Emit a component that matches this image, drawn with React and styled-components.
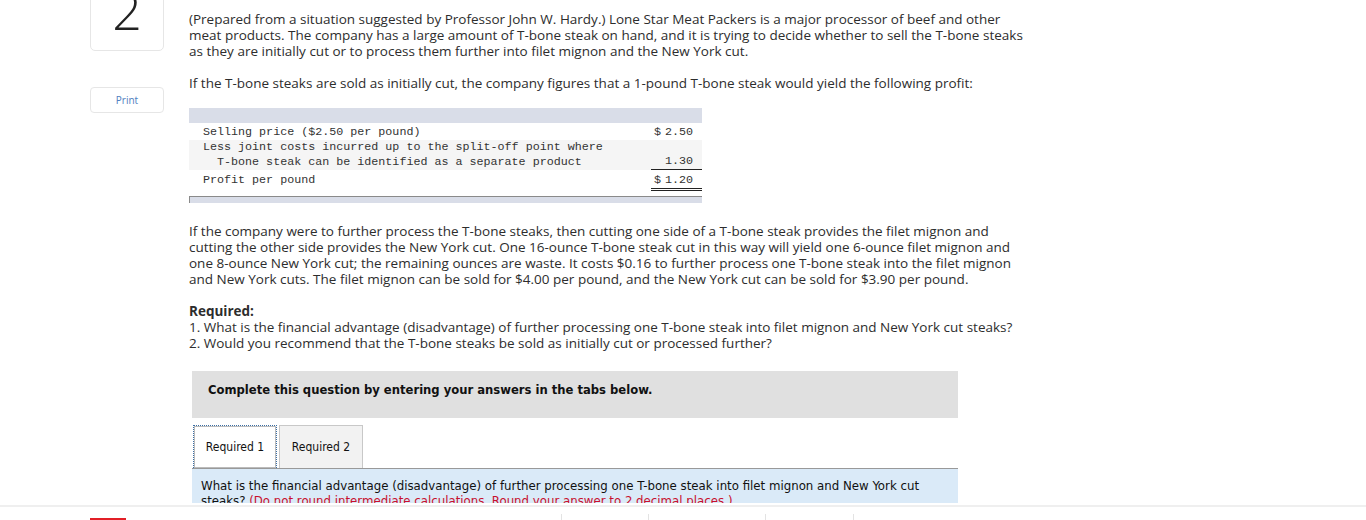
import React from 'react';
import styled, { createGlobalStyle } from 'styled-components';

const GlobalStyle = createGlobalStyle`
  html, body {
    margin: 0;
    padding: 0;
    background: #fff;
    overflow: hidden;
  }
  body {
    font-family: "Open Sans", Lato, sans-serif;
    color: #2d2d2d;
  }
`;

const Page = styled.div`
  height: 520px;
  overflow: hidden;
  display: flex;
  flex-direction: column;
`;

const Main = styled.div`
  display: grid;
  grid-template-columns: 74px 1fr;
  column-gap: 25px;
  padding-left: 90px;
  height: 505px;
  overflow: hidden;
`;

const Side = styled.div`
  display: flex;
  flex-direction: column;
  gap: 36px;
  margin-top: -26px;
`;

const NumberBox = styled.div`
  height: 77px;
  border: 1px solid #e6e6e6;
  border-radius: 5px;
  display: flex;
  align-items: flex-end;
  justify-content: center;
  box-sizing: border-box;
  padding-bottom: 14px;
  font-family: "Open Sans", sans-serif;
  font-weight: 300;
  font-size: 52px;
  line-height: 1;
  color: #222;
`;

const PrintButton = styled.div`
  height: 26px;
  border: 1px solid #e6e6e6;
  border-radius: 4px;
  box-sizing: border-box;
  display: flex;
  align-items: center;
  justify-content: center;
  font-size: 10px;
  color: #4f7ec0;
`;

const Content = styled.div`
  padding-top: 11px;
  font-size: 13.5px;
  line-height: 16px;
`;

const Para = styled.p`
  margin: 0 0 16px;
  white-space: nowrap;
`;

const Table = styled.div`
  width: 513px;
  margin: 17px 0 20px;
  font-family: "Liberation Mono", "DejaVu Sans Mono", monospace;
  font-size: 11.7px;
  line-height: 15px;
  color: #333;
`;

const HeadBand = styled.div`
  height: 15px;
  background: #d9dde8;
`;

const Row = styled.div`
  display: grid;
  grid-template-columns: 1fr 51px;
  padding: ${(p) => p.$pad || '0'};
  background: ${(p) => (p.$shade ? '#f5f5f5' : '#fff')};
`;

const Label = styled.div`
  padding-left: 14px;
  white-space: pre;
`;

const Amount = styled.div`
  display: flex;
  align-items: flex-end;
  justify-content: space-between;
  padding: 0 9px 0 3px;
  border-bottom: ${(p) =>
    p.$under === 'single' ? '1px solid #222' : p.$under === 'double' ? '3px double #222' : '0'};
`;

const FootBand = styled.div`
  margin-top: 5px;
  height: 6px;
  background: #d9dde8;
  border-top: 1px solid #8a8a8a;
  border-left: 1px solid #8a8a8a;
`;

const Bold = styled.div`
  font-weight: 700;
`;

const TaskBox = styled.div`
  margin: 20px 0 0 3px;
  width: 766px;
`;

const TaskHeader = styled.div`
  background: #e0e0e0;
  height: 47px;
  box-sizing: border-box;
  padding: 11px 0 0 16px;
  font-family: "DejaVu Sans Condensed", "DejaVu Sans", sans-serif;
  font-weight: 700;
  font-size: 12.9px;
  line-height: 16px;
  color: #111;
`;

const Tabs = styled.div`
  display: flex;
  gap: 2px;
  margin-top: 7px;
  padding-left: 1px;
  border-bottom: 1px solid #999;
`;

const Tab = styled.div`
  width: 84px;
  height: 43px;
  box-sizing: border-box;
  display: flex;
  align-items: center;
  justify-content: center;
  font-family: "DejaVu Sans Condensed", "DejaVu Sans", sans-serif;
  font-size: 12px;
  color: #111;
  background: ${(p) => (p.$active ? '#fff' : '#f2f2f2')};
  border: ${(p) => (p.$active ? '1px dotted #3a6ea5' : '1px solid #c8c8c8')};
  border-bottom: 0;
  margin-bottom: ${(p) => (p.$active ? '-1px' : '0')};
  box-shadow: ${(p) => (p.$active ? 'inset 0 0 0 1px #bbb' : 'none')};
`;

const Prompt = styled.div`
  background: #daeaf8;
  padding: 9px 9px 0;
  height: 34px;
  box-sizing: border-box;
  font-family: "DejaVu Sans Condensed", "DejaVu Sans", sans-serif;
  font-size: 13.1px;
  line-height: 15px;
  color: #111;
  overflow: hidden;
  white-space: nowrap;
`;

const Hint = styled.span`
  color: #c8102e;
`;

const Footer = styled.div`
  border-top: 2px solid #efefef;
  height: 13px;
  display: flex;
  align-items: flex-end;
  padding-left: 90px;
`;

const RedBar = styled.div`
  width: 36px;
  height: 2px;
  background: #e21f26;
`;

const Dividers = styled.div`
  display: flex;
  margin-left: 435px;
  height: 6px;
`;

const Divider = styled.div`
  width: ${(p) => p.$w}px;
  border-left: 1px solid #e3e3e3;
`;

export default function App() {
  return (
    <Page>
      <GlobalStyle />
      <Main>
        <Side>
          <NumberBox>2</NumberBox>
          <PrintButton>Print</PrintButton>
        </Side>
        <Content>
          <Para>
            (Prepared from a situation suggested by Professor John W. Hardy.) Lone Star Meat Packers is a major processor of beef and other
            <br />
            meat products. The company has a large amount of T-bone steak on hand, and it is trying to decide whether to sell the T-bone steaks
            <br />
            as they are initially cut or to process them further into filet mignon and the New York cut.
          </Para>
          <Para style={{ marginBottom: 0 }}>
            If the T-bone steaks are sold as initially cut, the company figures that a 1-pound T-bone steak would yield the following profit:
          </Para>
          <Table>
            <HeadBand />
            <Row $pad="2px 0 0">
              <Label>Selling price ($2.50 per pound)</Label>
              <Amount>
                <span>$</span>
                <span>2.50</span>
              </Amount>
            </Row>
            <Row $shade>
              <Label>{'Less joint costs incurred up to the split-off point where\n  T-bone steak can be identified as a separate product'}</Label>
              <Amount $under="single">
                <span />
                <span>1.30</span>
              </Amount>
            </Row>
            <Row $pad="3px 0 0">
              <Label>Profit per pound</Label>
              <Amount $under="double">
                <span>$</span>
                <span>1.20</span>
              </Amount>
            </Row>
            <FootBand />
          </Table>
          <Para>
            If the company were to further process the T-bone steaks, then cutting one side of a T-bone steak provides the filet mignon and
            <br />
            cutting the other side provides the New York cut. One 16-ounce T-bone steak cut in this way will yield one 6-ounce filet mignon and
            <br />
            one 8-ounce New York cut; the remaining ounces are waste. It costs $0.16 to further process one T-bone steak into the filet mignon
            <br />
            and New York cuts. The filet mignon can be sold for $4.00 per pound, and the New York cut can be sold for $3.90 per pound.
          </Para>
          <Para style={{ marginBottom: 0 }}>
            <Bold>Required:</Bold>
            1. What is the financial advantage (disadvantage) of further processing one T-bone steak into filet mignon and New York cut steaks?
            <br />
            2. Would you recommend that the T-bone steaks be sold as initially cut or processed further?
          </Para>
          <TaskBox>
            <TaskHeader>Complete this question by entering your answers in the tabs below.</TaskHeader>
            <Tabs>
              <Tab $active>Required 1</Tab>
              <Tab>Required 2</Tab>
            </Tabs>
            <Prompt>
              What is the financial advantage (disadvantage) of further processing one T-bone steak into filet mignon and New York cut
              <br />
              steaks? <Hint>(Do not round intermediate calculations. Round your answer to 2 decimal places.)</Hint>
            </Prompt>
          </TaskBox>
        </Content>
      </Main>
      <Footer>
        <RedBar />
        <Dividers>
          <Divider $w={86} />
          <Divider $w={116} />
          <Divider $w={87} />
          <Divider $w={20} />
        </Dividers>
      </Footer>
    </Page>
  );
}
